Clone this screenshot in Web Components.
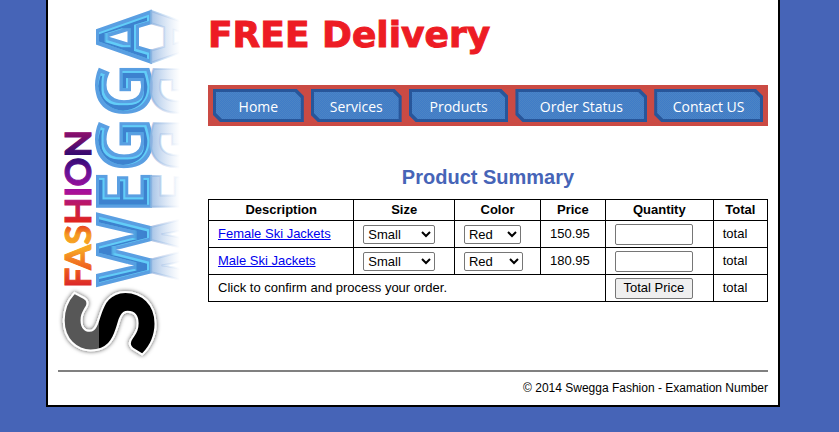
<!DOCTYPE html>
<html lang="en">
<head>
<meta charset="utf-8">
<title>Swegga Fashion - Product Summary</title>
<style>
  body { margin: 0; background: #4664b7; color: #000; font: 13px/16px "Liberation Sans", Arial, sans-serif; }
</style>
</head>
<body>
<shop-page>
  <shop-logo slot="logo"></shop-logo>
  <promo-banner>FREE Delivery</promo-banner>
  <shop-nav>
    <nav-tab href="#home">Home</nav-tab>
    <nav-tab href="#services">Services</nav-tab>
    <nav-tab href="#products">Products</nav-tab>
    <nav-tab href="#orders">Order Status</nav-tab>
    <nav-tab href="#contact">Contact US</nav-tab>
  </shop-nav>
  <product-summary>Product Summary</product-summary>
  <span slot="footer">© 2014 Swegga Fashion - Examation Number</span>
</shop-page>

<template id="page-t">
  <style>
    :host { display: block; margin: 0 59px 25px 46px; padding: 10px 10px 9px; border: solid #000; border-width: 0 2px 2px; background: #fff; }
    .body { display: grid; grid-template-columns: 150px minmax(0, 1fr); }
    main { min-width: 0; }
    footer { margin-top: 16px; padding-top: 8px; border-top: 2px solid #808080; text-align: right; font-size: 12px; }
  </style>
  <div class="body"><slot name="logo"></slot><main><slot></slot></main></div>
  <footer><slot name="footer"></slot></footer>
</template>

<template id="logo-t">
  <style>
    :host { display: block; }
    svg { display: block; width: 100%; height: auto; overflow: visible; }
    text { font-family: "Open Sans", "Noto Sans", sans-serif; font-weight: 700; }
    .word { font-size: 75px; }
    .tag { font: 700 36px Lato, sans-serif; }
    .big { font: 700 116px Lato, sans-serif; }
  </style>
  <svg viewBox="0 0 150 344" role="img" aria-label="Swegga Fashion">
    <defs>
      <linearGradient id="rain" gradientUnits="userSpaceOnUse" x1="0" y1="0" x2="156" y2="0">
        <stop offset="0" stop-color="#d81f2a"/><stop offset=".12" stop-color="#ee5a20"/>
        <stop offset=".25" stop-color="#f7a823"/><stop offset=".34" stop-color="#f59a22"/><stop offset=".42" stop-color="#e2241c"/>
        <stop offset=".52" stop-color="#c01858"/><stop offset=".62" stop-color="#a60f9c"/>
        <stop offset=".74" stop-color="#6a1296"/><stop offset=".84" stop-color="#2c0870"/>
        <stop offset="1" stop-color="#8e0f6c"/>
      </linearGradient>
      <linearGradient id="tone" gradientUnits="userSpaceOnUse" x1="0" y1="-94" x2="0" y2="0">
        <stop offset=".44" stop-color="#575757"/><stop offset=".44" stop-color="#000"/>
      </linearGradient>
      <linearGradient id="fade" gradientUnits="userSpaceOnUse" x1="0" y1="0" x2="0" y2="-29">
        <stop offset="0" stop-color="#8fb4e0" stop-opacity=".8"/><stop offset="1" stop-color="#b9cfee" stop-opacity="0"/>
      </linearGradient>
      <filter id="bevel" x="-5%" y="-5%" width="110%" height="110%">
        <feMorphology in="SourceAlpha" operator="erode" radius="3" result="a"/>
        <feFlood flood-color="#62cdf8"/><feComposite in2="a" operator="in" result="lit"/>
        <feMorphology in="SourceAlpha" operator="erode" radius="4" result="b"/>
        <feOffset in="b" dx="-1" dy="-1" result="bo"/>
        <feFlood flood-color="#3d82cf"/><feComposite in2="bo" operator="in" result="dark"/>
        <feMerge result="m"><feMergeNode in="SourceGraphic"/><feMergeNode in="lit"/><feMergeNode in="dark"/></feMerge>
        <feGaussianBlur in="m" stdDeviation=".5"/>
      </filter>
      <filter id="halo" x="-20%" y="-20%" width="140%" height="140%">
        <feDropShadow dx="0" dy="0" stdDeviation="2" flood-color="#000" flood-opacity=".7"/>
      </filter>
    </defs>
    <g transform="translate(93 276) rotate(-90)">
      <text class="word" fill="#5a9fe2" stroke="#5a9fe2" stroke-width="2" filter="url(#bevel)">WEGGA</text>
      <g transform="scale(1 -1)" aria-hidden="true"><text class="word" fill="url(#fade)" stroke="url(#fade)" stroke-width="2">WEGGA</text></g>
    </g>
    <g transform="translate(33 278) rotate(-90)"><text class="tag" fill="url(#rain)" stroke="url(#rain)">FASHION</text></g>
    <g transform="translate(94 344) rotate(-90)"><text class="big" fill="url(#tone)" stroke="#fff" stroke-width="7" paint-order="stroke" filter="url(#halo)">S</text><text class="big" fill="url(#tone)" stroke="url(#tone)" stroke-width="3" aria-hidden="true">S</text></g>
  </svg>
</template>

<template id="banner-t">
  <style>
    :host { display: block; color: #ed1c24; font: 700 36px/50px "DejaVu Sans", Verdana, sans-serif; -webkit-text-stroke: 1px #ed1c24; }
  </style>
  <slot></slot>
</template>

<template id="nav-t">
  <style>
    :host { display: block; margin-top: 25px; }
    nav { display: grid; grid-template-columns: 91fr 91fr 100fr 132fr 109fr; gap: 7px; padding: 4px 5px 4px 5px;
      background: repeating-conic-gradient(#d4483c 0 25%, #c14d4c 0 50%) 0 0 / 2px 2px; }
  </style>
  <nav><slot></slot></nav>
</template>

<template id="tab-t">
  <style>
    :host { display: block; }
    a { display: block; padding: 3px; background: #28569a; color: #fff; text-decoration: none; text-align: center;
      clip-path: polygon(0 0, calc(100% - 7px) 0, 100% 7px, 100% 100%, 7px 100%, 0 calc(100% - 7px)); }
    span { display: block; padding: 5px 0 2px; font: 14px/20px "Open Sans", "Noto Sans", sans-serif; white-space: nowrap;
      background: repeating-conic-gradient(#3f7cc8 0 25%, #4c84c4 0 50%) 0 0 / 2px 2px;
      clip-path: polygon(0 0, calc(100% - 6px) 0, 100% 6px, 100% 100%, 6px 100%, 0 calc(100% - 6px)); }
  </style>
  <a><span><slot></slot></span></a>
</template>

<template id="summary-t">
  <style>
    :host { display: block; margin-top: 39px; }
    h2 { margin: 0 0 10px; color: #4664b7; font-size: 20px; line-height: 24px; text-align: center; }
    table { width: 100%; border-collapse: collapse; table-layout: fixed; }
    th, td { box-sizing: border-box; border: 1px solid #000; padding: 0 9px; text-align: left; white-space: nowrap; }
    th { height: 21px; text-align: center; padding: 0; }
    td { height: 27px; }
    a { color: #00e; }
    select, input, button { display: block; box-sizing: border-box; margin: 0; border: 1px solid #767676; border-radius: 2px; color: #000; font: inherit; }
    select { height: 19px; padding: 0; background: #fff; }
    .size { width: 72px; }
    .color { width: 57px; }
    .wide { width: 59px; }
    input, button { width: 100%; max-width: 78px; height: 21px; }
    input { background: #fff; }
    button { padding: 0; background: #efefef; text-align: center; }
  </style>
  <h2><slot></slot></h2>
  <table>
    <colgroup><col style="width:26%"><col style="width:18%"><col style="width:15.4%"><col style="width:11.6%"><col style="width:19.3%"><col></colgroup>
    <thead><tr><th>Description</th><th>Size</th><th>Color</th><th>Price</th><th>Quantity</th><th>Total</th></tr></thead>
    <tbody>
      <tr>
        <td><a href="#female">Female Ski Jackets</a></td>
        <td><select class="size" aria-label="Size, Female Ski Jackets"><option>Small</option><option>Medium</option><option>Large</option></select></td>
        <td><select class="color" aria-label="Color, Female Ski Jackets"><option>Red</option><option>Pink</option></select></td>
        <td>150.95</td><td><input type="text" aria-label="Quantity, Female Ski Jackets"></td><td>total</td>
      </tr>
      <tr>
        <td><a href="#male">Male Ski Jackets</a></td>
        <td><select class="size" aria-label="Size, Male Ski Jackets"><option>Small</option><option>Medium</option><option>Large</option></select></td>
        <td><select class="color wide" aria-label="Color, Male Ski Jackets"><option>Red</option><option>Blue</option></select></td>
        <td>180.95</td><td><input type="text" aria-label="Quantity, Male Ski Jackets"></td><td>total</td>
      </tr>
      <tr><td colspan="4">Click to confirm and process your order.</td><td><button type="button">Total Price</button></td><td>total</td></tr>
    </tbody>
  </table>
</template>

<script>
  class Templated extends HTMLElement {
    constructor() {
      super();
      const t = document.getElementById(this.constructor.template);
      this.attachShadow({ mode: "open" }).append(t.content.cloneNode(true));
    }
  }
  customElements.define("shop-page", class extends Templated { static template = "page-t"; });
  customElements.define("shop-logo", class extends Templated { static template = "logo-t"; });
  customElements.define("promo-banner", class extends Templated { static template = "banner-t"; });
  customElements.define("shop-nav", class extends Templated { static template = "nav-t"; });
  customElements.define("nav-tab", class extends Templated {
    static template = "tab-t";
    connectedCallback() { this.shadowRoot.querySelector("a").href = this.getAttribute("href"); }
  });
  customElements.define("product-summary", class extends Templated { static template = "summary-t"; });
</script>
</body>
</html>
